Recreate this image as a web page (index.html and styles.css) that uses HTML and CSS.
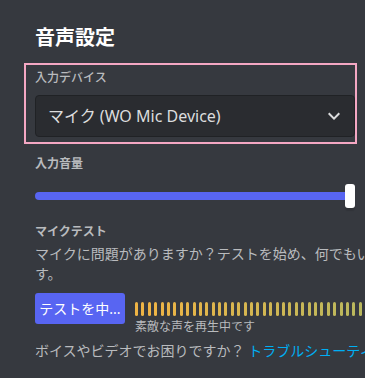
FILE: index.html
```html
<!DOCTYPE html>
<html lang="ja">
<head>
<meta charset="utf-8">
<link rel="stylesheet" href="styles.css">
</head>
<body>
<div class="page">
  <h2 class="title">音声設定</h2>
  <div class="field">
    <div class="label label-light">入力デバイス</div>
    <div class="select">
      <span class="select-value">マイク (WO Mic Device)</span>
      <svg class="chevron" width="24" height="24" viewBox="0 0 24 24"><path fill="currentColor" d="M16.59 8.59L12 13.17 7.41 8.59 6 10l6 6 6-6z"/></svg>
    </div>
  </div>
  <div class="field field-volume">
    <div class="label">入力音量</div>
    <div class="slider">
      <div class="track"></div>
      <div class="thumb"></div>
    </div>
  </div>
  <div class="label label-test">マイクテスト</div>
  <p class="desc">マイクに問題がありますか？テストを始め、何でもいいので話してみてください。あなたの声を再生します。</p>
  <div class="test-row">
    <button class="btn">テストを中...</button>
    <div class="meter-wrap">
      <div class="meter">
        <span></span><span></span><span></span><span></span><span></span><span></span><span></span><span></span><span></span><span></span>
        <span></span><span></span><span></span><span></span><span></span><span></span><span></span><span></span><span></span><span></span>
        <span></span><span></span><span></span><span></span><span></span><span></span><span></span><span></span><span></span><span></span>
        <span></span><span></span><span></span><span></span><span></span><span></span><span></span><span></span><span></span><span></span>
      </div>
      <div class="meter-note">素敵な声を再生中です</div>
    </div>
  </div>
  <p class="help">ボイスやビデオでお困りですか？ <a class="link">トラブルシューティングガイド</a>をご覧ください。</p>
</div>
<div class="highlight"></div>
</body>
</html>
```
FILE: styles.css
```css
html, body {
  margin: 0;
  padding: 0;
}
body {
  width: 365px;
  height: 378px;
  overflow: hidden;
  background: #36393f;
  font-family: "Noto Sans", "Noto Sans CJK JP", sans-serif;
  color: #b9bbbe;
  position: relative;
}
.page {
  width: 660px;
  padding: 26px 0 0 35px;
}
.title {
  margin: 0 0 20px;
  font-size: 20px;
  line-height: 24px;
  font-weight: 700;
  color: #ffffff;
}
.field {
  width: 320px;
}
.label {
  font-size: 12px;
  line-height: 16px;
  font-weight: 700;
  color: #b9bbbe;
}
.label-light {
  font-weight: 500;
}
.select {
  margin-top: 9px;
  height: 42px;
  box-sizing: border-box;
  border: 1px solid #202225;
  border-radius: 4px;
  background: #2a2c30;
  display: flex;
  align-items: center;
  padding: 0 8px 0 12px;
  color: #dcddde;
}
.select-value {
  flex: 1;
  font-size: 16px;
  line-height: 20px;
}
.chevron {
  color: #dcddde;
  display: block;
}
.field-volume {
  margin-top: 19px;
}
.slider {
  margin-top: 12px;
  height: 24px;
  display: flex;
  align-items: center;
  position: relative;
}
.track {
  flex: 1;
  height: 8px;
  border-radius: 4px;
  background: #5865f2;
  margin-right: 5px;
}
.thumb {
  position: absolute;
  right: 0;
  top: 0;
  width: 10px;
  height: 24px;
  border-radius: 3px;
  background: #ffffff;
  box-shadow: 0 3px 1px rgba(0,0,0,0.1);
}
.label-test {
  margin-top: 16px;
}
.desc {
  margin: 4px 0 0;
  font-size: 14px;
  line-height: 20px;
  color: #b9bbbe;
}
.test-row {
  margin-top: 9px;
  display: flex;
  align-items: center;
  gap: 10px;
}
.btn {
  width: 90px;
  height: 31px;
  border: 0;
  border-radius: 3px;
  background: #5865f2;
  color: #ffffff;
  font-family: "Noto Sans", "Noto Sans CJK JP", sans-serif;
  font-size: 14px;
  line-height: 16px;
  padding: 0 4px;
  white-space: nowrap;
  overflow: hidden;
}
.meter-wrap {
  position: relative;
  flex: 1;
}
.meter {
  display: flex;
  gap: 3.4px;
  height: 14px;
}
.meter span {
  width: 3px;
  height: 14px;
  border-radius: 2px;
  flex: none;
  background: linear-gradient(to right, #f2b23f 0px, #eeb445 150px, #b8b85e 365px, #a0b45c 600px);
  background-attachment: fixed;
}
.meter-note {
  position: absolute;
  left: 0;
  top: 17px;
  font-size: 12px;
  line-height: 16px;
  color: #b9bbbe;
  white-space: nowrap;
}
.help {
  margin: 17px 0 0;
  font-size: 14px;
  line-height: 20px;
  color: #b9bbbe;
  white-space: nowrap;
}
.link {
  color: #00aff4;
}
.highlight {
  position: absolute;
  left: 24px;
  top: 63px;
  width: 333px;
  height: 81px;
  box-sizing: border-box;
  border: 2px solid #f4a7c3;
}
```
